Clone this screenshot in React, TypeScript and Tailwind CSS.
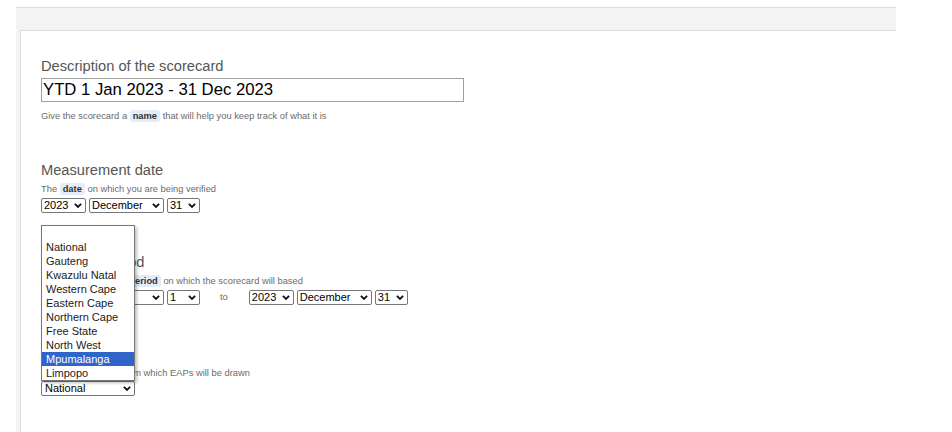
import React from "react";

const Chevron = () => (
  <svg width="8" height="5" viewBox="0 0 8 5" className="shrink-0">
    <path d="M0.9 0.9 L4 3.9 L7.1 0.9" fill="none" stroke="#111" strokeWidth="1.9" />
  </svg>
);

const Select = ({ value, w, pl = "pl-[2px]" }: { value: string; w: string; pl?: string }) => (
  <div
    className={`${w} ${pl} h-[15px] flex items-center justify-between border border-[#767676] rounded-[2px] bg-white pr-[3px] text-[11px] leading-none text-black`}
  >
    <span>{value}</span>
    <Chevron />
  </div>
);

const Badge = ({ children, className = "" }: { children: React.ReactNode; className?: string }) => (
  <span className={`bg-[#e3edf9] text-[#333] font-bold px-[3px] py-[1px] rounded-[3px] ${className}`}>{children}</span>
);

const Heading = ({ children, className = "" }: { children: React.ReactNode; className?: string }) => (
  <h2 className={`text-[14.67px] leading-[17px] text-[#555] ${className}`}>{children}</h2>
);

const Help = ({ children }: { children: React.ReactNode }) => (
  <p className="mt-[4px] text-[9.33px] leading-[13px] text-[#6b6b6b]">{children}</p>
);

const regions = [
  "",
  "National",
  "Gauteng",
  "Kwazulu Natal",
  "Western Cape",
  "Eastern Cape",
  "Northern Cape",
  "Free State",
  "North West",
  "Mpumalanga",
  "Limpopo",
];

export default function App() {
  return (
    <div className="h-[432px] w-[952px] overflow-hidden bg-white pt-[7px] pl-[16px] font-['Liberation_Sans',Arial,sans-serif]">
      <div className="w-[880px] h-[425px] bg-[#f3f3f3] border-t border-[#dedede] pt-[22px] pl-[4px] flex flex-col">
        <div className="flex-1 bg-white border-t border-l border-[#dcdcdc] pt-[27px] pl-[20px]">
          {/* description */}
          <Heading>Description of the scorecard</Heading>
          <input
            readOnly
            defaultValue="YTD 1 Jan 2023 - 31 Dec 2023"
            className="mt-[3px] block w-[423px] h-[24px] border border-[#a0a0a0] px-[1px] text-[16.7px] text-black outline-none"
          />
          <p className="mt-[8px] text-[9.33px] leading-[13px] text-[#6b6b6b]">
            Give the scorecard a <Badge>name</Badge> that will help you keep track of what it is
          </p>

          {/* measurement date */}
          <Heading className="mt-[39px]">Measurement date</Heading>
          <Help>
            The <Badge>date</Badge> on which you are being verified
          </Help>
          <div className="mt-[2px] flex gap-[3px]">
            <Select value="2023" w="w-[45px]" />
            <Select value="December" w="w-[75px]" />
            <Select value="31" w="w-[33px]" />
          </div>

          {/* period */}
          <Heading className="mt-[41px]">Financial period</Heading>
          <Help>
            The measurement <Badge className="ml-[7px]">period</Badge> on which the scorecard will based
          </Help>
          <div className="mt-[2px] flex items-center gap-[3px]">
            <Select value="2023" w="w-[45px]" />
            <Select value="January" w="w-[75px]" />
            <Select value="1" w="w-[33px]" />
            <span className="ml-[17px] mr-[18px] text-[9.33px] text-[#6b6b6b]">to</span>
            <Select value="2023" w="w-[45px]" />
            <Select value="December" w="w-[75px]" />
            <Select value="31" w="w-[33px]" />
          </div>

          {/* region */}
          <Heading className="mt-[41px]">Region</Heading>
          <Help>
            The <Badge className="ml-[4px]">EAP region</Badge> from which EAPs will be drawn
          </Help>
          <div className="relative mt-[1px] w-[94px]">
            <Select value="National" w="w-[94px]" pl="pl-[3px]" />
            <ul className="absolute bottom-full left-0 w-[94px] bg-white border border-[#767676] shadow-[2px_2px_3px_rgba(0,0,0,0.25)]">
              {regions.map((r, i) => (
                <li
                  key={i}
                  className={
                    r === "Mpumalanga"
                      ? "h-[14px] pl-[4px] text-[11px] leading-[14px] bg-[#2f64c9] text-white"
                      : "h-[14px] pl-[4px] text-[11px] leading-[14px] text-[#1a1a1a]"
                  }
                >
                  {r}
                </li>
              ))}
            </ul>
          </div>
        </div>
      </div>
    </div>
  );
}
